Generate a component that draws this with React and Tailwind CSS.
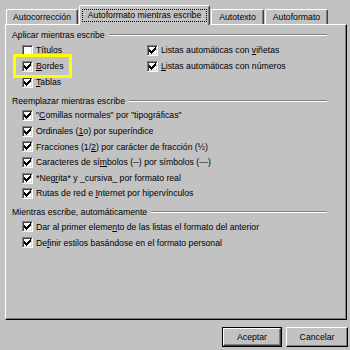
import React from "react";

function Check({ checked }) {
  return (
    <span className="flex items-center justify-center w-[11px] h-[11px] shrink-0 bg-white border border-t-[#808080] border-l-[#808080] border-r-white border-b-white shadow-[inset_1px_1px_0_#404040,inset_-1px_-1px_0_#d8d8d8]">
      {checked && (
        <svg width="7" height="7" viewBox="0 0 7 7" shapeRendering="crispEdges">
          <path
            fill="#000"
            d="M6 0h1v1h-1z M5 1h2v1h-2z M0 2h1v1h-1z M4 2h3v1h-3z M0 3h2v1h-2z M3 3h3v1h-3z M0 4h5v1h-5z M1 5h3v1h-3z M2 6h1v1h-1z"
          />
        </svg>
      )}
    </span>
  );
}

function Row({ checked = true, children, h = "h-[16px]" }) {
  return (
    <div className={`flex items-center gap-[3px] ${h}`}>
      <Check checked={checked} />
      <span className="whitespace-nowrap">{children}</span>
    </div>
  );
}

function Header({ children, className = "" }) {
  return (
    <div className={`flex items-center h-[14px] ${className}`}>
      <span className="whitespace-nowrap">{children}</span>
      <div className="flex-1 ml-[4px] h-[2px] border-t border-t-[#808080] border-b border-b-white" />
    </div>
  );
}

function Tab({ children, className = "" }) {
  return (
    <div
      className={`flex items-center justify-center h-[15px] rounded-t-[2px] border-t border-l border-t-white border-l-white border-r border-r-[#404040] shadow-[inset_-1px_0_0_#808080] ${className}`}
    >
      {children}
    </div>
  );
}

export default function App() {
  return (
    <div className="w-[350px] h-[350px] bg-[#c2c2c2] text-[#000] text-[8.7px] leading-none font-['Liberation_Sans',Arial,sans-serif] relative overflow-hidden">
      {/* Tabs */}
      <div className="flex items-end gap-[1px] h-[24px] pt-[5px] pl-[6px]">
        <Tab className="w-[72px]">Autocorrección</Tab>
        <div className="relative z-10 -mb-[1px] flex items-center justify-center w-[131px] h-[20px] bg-[#c2c2c2] rounded-t-[2px] border-t border-l border-t-white border-l-white border-r border-r-[#404040] shadow-[inset_-1px_0_0_#808080]">
          <span className="flex items-center justify-center w-[125px] h-[13px] border border-dotted border-black">
            Autoformato mientras escribe
          </span>
        </div>
        <Tab className="w-[53px]">Autotexto</Tab>
        <Tab className="w-[63px]">Autoformato</Tab>
      </div>

      {/* Panel */}
      <div className="ml-[5px] w-[342px] h-[296px] border-t border-l border-t-white border-l-white border-r border-b border-r-black border-b-black shadow-[inset_-1px_-1px_0_#808080] pl-[6px] pr-[19px] pt-[3px]">
        <Header>Aplicar mientras escribe</Header>
        <div className="flex pl-[10px]">
          <div className="w-[125px]">
            <Row checked={false}>Títulos</Row>
            <Row>
              <u>B</u>ordes
            </Row>
            <Row>
              <u>T</u>ablas
            </Row>
          </div>
          <div>
            <Row>
              Listas automáticas con <u>v</u>iñetas
            </Row>
            <Row>
              <u>L</u>istas automáticas con números
            </Row>
          </div>
        </div>

        <Header className="mt-[4px]">Reemplazar mientras escribe</Header>
        <div className="pl-[10px]">
          <Row h="h-[15.6px]">
            "<u>C</u>omillas normales" por "tipográficas"
          </Row>
          <Row h="h-[15.6px]">
            Ordinales (<u>1</u>o) por superíndice
          </Row>
          <Row h="h-[15.6px]">
            Fracciones (1/<u>2</u>) por carácter de fracción (½)
          </Row>
          <Row h="h-[15.6px]">
            Caracteres de sí<u>m</u>bolos (--) por símbolos (—)
          </Row>
          <Row h="h-[15.6px]">
            *Neg<u>r</u>ita* y _cursiva_ por formato real
          </Row>
          <Row h="h-[15.6px]">
            Rutas de red e <u>I</u>nternet por hipervínculos
          </Row>
        </div>

        <Header className="mt-[3.4px]">Mientras escribe, automáticamente</Header>
        <div className="pl-[10px]">
          <Row>
            Dar al primer eleme<u>n</u>to de las listas el formato del anterior
          </Row>
          <Row>
            De<u>f</u>inir estilos basándose en el formato personal
          </Row>
        </div>
      </div>

      {/* Buttons */}
      <div className="flex justify-end gap-[4px] pr-[2px] mt-[7px]">
        <div className="w-[60px] h-[20px] border border-black">
          <div className="w-full h-full flex items-center justify-center border border-t-white border-l-white border-r-[#404040] border-b-[#404040] shadow-[inset_-1px_-1px_0_#808080]">
            Aceptar
          </div>
        </div>
        <div className="w-[62px] h-[20px] flex items-center justify-center border border-t-white border-l-white border-r-black border-b-black shadow-[inset_-1px_-1px_0_#808080]">
          Cancelar
        </div>
      </div>

      {/* Highlight annotation */}
      <div className="absolute left-[13px] top-[54px] w-[59px] h-[24px] border-[3px] border-[#ffff00]" />
    </div>
  );
}
